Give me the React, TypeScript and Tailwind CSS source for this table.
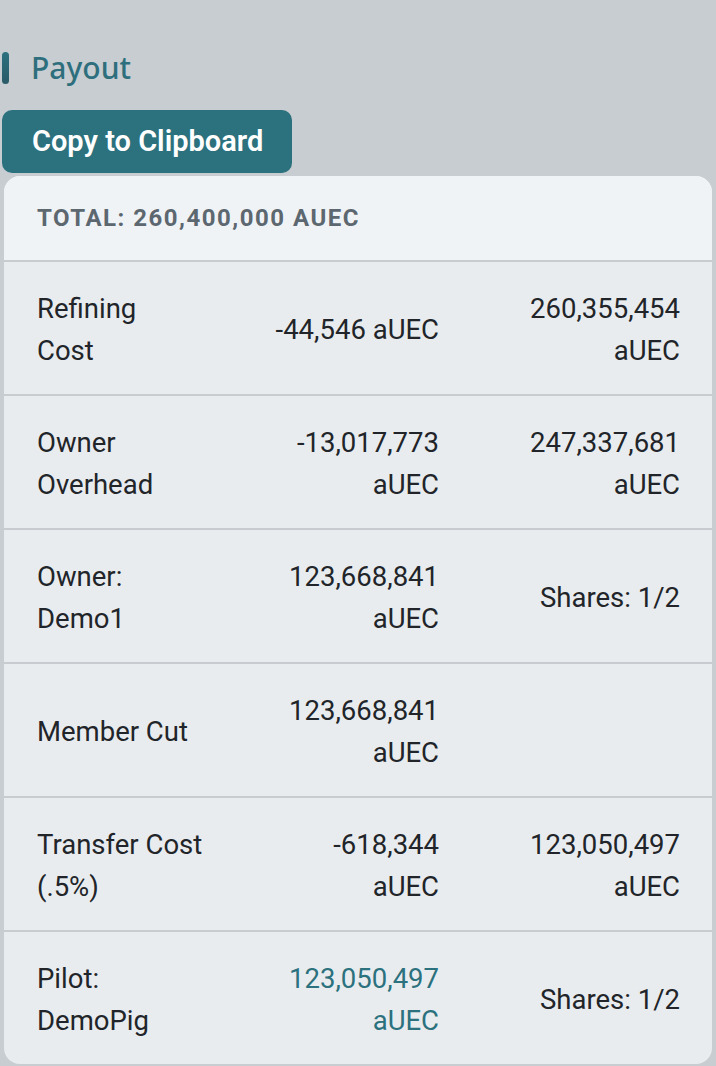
import React from 'react'

type Row = {
  label: string[]
  amount: string[]
  extra: string[]
  highlight?: boolean
}

const rows: Row[] = [
  { label: ['Refining', 'Cost'], amount: ['-44,546 aUEC'], extra: ['260,355,454', 'aUEC'] },
  { label: ['Owner', 'Overhead'], amount: ['-13,017,773', 'aUEC'], extra: ['247,337,681', 'aUEC'] },
  { label: ['Owner:', 'Demo1'], amount: ['123,668,841', 'aUEC'], extra: ['Shares: 1/2'] },
  { label: ['Member Cut'], amount: ['123,668,841', 'aUEC'], extra: [] },
  { label: ['Transfer Cost', '(.5%)'], amount: ['-618,344', 'aUEC'], extra: ['123,050,497', 'aUEC'] },
  { label: ['Pilot:', 'DemoPig'], amount: ['123,050,497', 'aUEC'], extra: ['Shares: 1/2'], highlight: true },
]

function Lines({ lines }: { lines: string[] }) {
  return (
    <>
      {lines.map((l, i) => (
        <span key={i} className="block">
          {l}
        </span>
      ))}
    </>
  )
}

export default function App() {
  return (
    <div
      className="min-h-[1066px] w-full bg-[#c8cdd1] pt-[50px] pb-[2px] pr-[4px]"
      style={{ fontFamily: 'Roboto, "Noto Sans", sans-serif' }}
    >
      {/* 見出し */}
      <div className="flex items-center gap-[22px] pl-[2px]">
        <div className="h-[32px] w-[7px] rounded-full bg-gradient-to-b from-[#2c717e] to-[#2a5a68]" />
        <h2
          className="text-[30px] leading-[36px] font-medium text-[#2e6f7d]"
          style={{ fontFamily: '"Noto Sans", sans-serif' }}
        >
          Payout
        </h2>
      </div>

      <div className="mt-[24px] pl-[2px]">
        <button className="h-[63px] w-[290px] rounded-[10px] bg-[#2c717e] pl-[30px] text-left text-[29px] font-semibold text-white">
          Copy to Clipboard
        </button>
      </div>

      {/* テーブル */}
      <div className="ml-[4px] mt-[3px] overflow-hidden rounded-[16px] bg-[#e9ecef] text-[27.5px] text-[#212529]">
        <div className="bg-[#f0f3f6] px-[33px] py-[24px] text-[24px] font-bold uppercase leading-[36px] tracking-[1.5px] text-[#5c6770]">
          Total: 260,400,000 aUEC
        </div>
        {rows.map((r, i) => (
          <div
            key={i}
            className="grid grid-cols-[1fr_200px_241px] items-center border-t-2 border-[#c8ccd0] pl-[33px] pr-[32px] pt-[26px] pb-[22px] leading-[42px]"
          >
            <div>
              <Lines lines={r.label} />
            </div>
            <div className={`text-right ${r.highlight ? 'text-[#2c717e]' : ''}`}>
              <Lines lines={r.amount} />
            </div>
            <div className="text-right min-h-[84px] flex flex-col justify-center">
              <Lines lines={r.extra} />
            </div>
          </div>
        ))}
      </div>
    </div>
  )
}
